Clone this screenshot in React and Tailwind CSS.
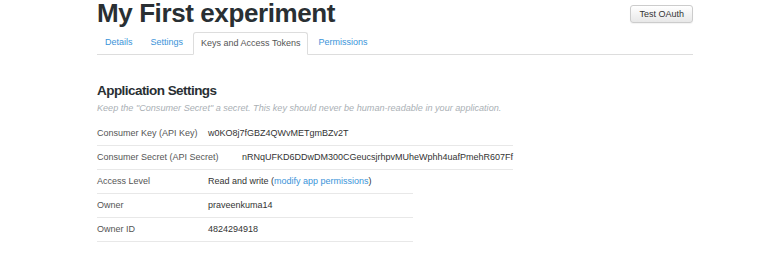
import React from 'react';

const tabs = ['Details', 'Settings', 'Keys and Access Tokens', 'Permissions'];

const Row = ({ label, labelWidth = 'w-[111px]', width = 'w-[416px]', children }) => (
    <div className={`flex ${width} border-b border-[#e8e8e8] py-1 leading-[15px]`}>
        <span className={`${labelWidth} shrink-0 text-[#555]`}>{label}</span>
        <span className="text-[#333] whitespace-nowrap">{children}</span>
    </div>
);

export default function App() {
    return (
        <div className="min-h-[274px] bg-white font-['Liberation_Sans',Arial,sans-serif]">
            <div className="ml-[97px] w-[596px]">
                {/* header */}
                <div className="flex items-start justify-between">
                    <h1 className="text-[26px] leading-[26px] font-bold tracking-[-0.4px] text-[#292f33]">
                        My First experiment
                    </h1>
                    <button className="mt-[5px] h-[18px] px-[8px] rounded-[3px] border border-[#ccc] bg-gradient-to-b from-white to-[#e8e8e8] text-[9px] leading-[16px] text-[#333] shadow-[0_1px_1px_rgba(0,0,0,0.05)]">
                        Test OAuth
                    </button>
                </div>

                {/* tabs */}
                <div className="mt-[6px] flex border-b border-[#ddd] text-[9px]">
                    {tabs.map((t) => {
                        const active = t === 'Keys and Access Tokens';
                        return (
                            <div
                                key={t}
                                className={
                                    active
                                        ? 'mr-[2px] -mb-px h-[23px] px-[7px] flex items-center rounded-t-[3px] border border-[#ddd] border-b-white bg-white text-[#555]'
                                        : 'mr-[2px] h-[22px] px-2 flex items-center text-[#3b94d9]'
                                }
                            >
                                {t}
                            </div>
                        );
                    })}
                </div>

                {/* application settings */}
                <h2 className="mt-[27px] text-[13.5px] leading-[18px] font-bold tracking-[-0.55px] text-[#292f33]">
                    Application Settings
                </h2>
                <p className="mt-px mb-[7px] text-[9.1px] leading-[14px] italic text-[#aab0b5]">
                    Keep the "Consumer Secret" a secret. This key should never be human-readable in your application.
                </p>

                <div className="text-[9px]">
                    <Row label="Consumer Key (API Key)">w0KO8j7fGBZ4QWvMETgmBZv2T</Row>
                    <Row label="Consumer Secret (API Secret)" labelWidth="w-[145px]">
                        nRNqUFKD6DDwDM300CGeucsjrhpvMUheWphh4uafPmehR607Ff
                    </Row>
                    <Row label="Access Level" width="w-[316px]">
                        Read and write (<span className="text-[#3b94d9]">modify app permissions</span>)
                    </Row>
                    <Row label="Owner" width="w-[316px]">praveenkuma14</Row>
                    <Row label="Owner ID" width="w-[316px]">4824294918</Row>
                </div>
            </div>
        </div>
    );
}
